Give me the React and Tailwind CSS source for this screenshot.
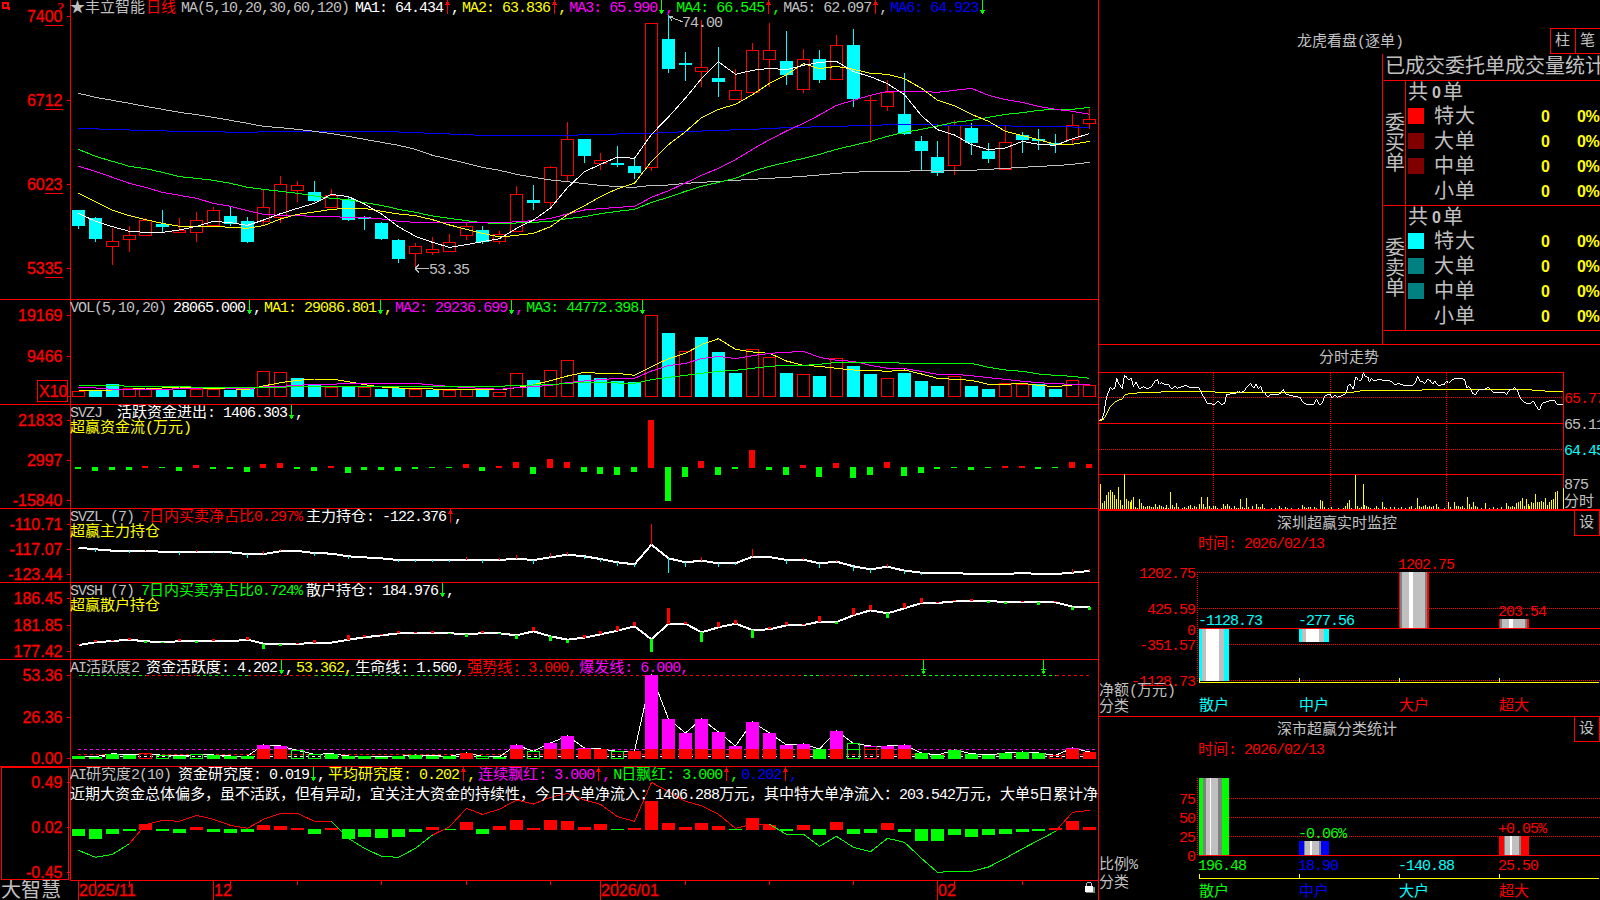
import React from "react";
import clsx from "clsx";

const RED = "#ff0000";
const CYAN = "#00ffff";
const GREEN = "#00ff00";
const YELLOW = "#ffff00";
const PINK = "#ff00ff";
const GREY = "#c0c0c0";
const DARK = "#808080";
const BLUE = "#0000ff";
const WHITE = "#ffffff";

const MONO = "'Liberation Mono', 'Noto Sans CJK SC', monospace";
const SANS = "'Liberation Sans', sans-serif";

// x position of the i-th trading day
const dayX = (i) => 78.5 + Math.round(i * 16.85);

// series are stored in thirds of a pixel below the given offset
const linePoints = (data, offset) => data.map(([i, v]) => `${dayX(i)},${offset + v / 3}`).join(" ");
const indexed = (values) => values.map((v, i) => [i, v]);

// [kind, body top, body bottom, high, low], kind c = falling, r = rising
const CANDLES = [
  ["c", 210, 226, 210, 228], ["c", 218, 239, 217, 241], ["r", 241, 246, 228, 264], ["r", 235, 239, 226, 251],
  ["r", 220, 235, 218, 235], ["c", 224, 227, 210, 231], ["r", 230, 232, 218, 232], ["r", 220, 232, 212, 241],
  ["r", 210, 225, 207, 225], ["c", 216, 224, 207, 225], ["c", 221, 242, 217, 242], ["r", 207, 221, 190, 225],
  ["r", 184, 217, 176, 222], ["r", 185, 190, 181, 201], ["c", 192, 201, 181, 201], ["r", 195, 207, 189, 207],
  ["c", 199, 220, 196, 220], ["c", 217, 219, 216, 229], ["c", 223, 239, 222, 239], ["c", 240, 259, 239, 262],
  ["r", 246, 253, 243, 268], ["r", 249, 252, 237, 254], ["r", 242, 251, 234, 251], ["r", 226, 235, 223, 239],
  ["c", 230, 242, 226, 243], ["r", 234, 241, 231, 243], ["r", 194, 231, 186, 231], ["c", 200, 203, 185, 209],
  ["r", 167, 202, 166, 208], ["r", 139, 175, 122, 181], ["c", 139, 156, 139, 162], ["r", 160, 163, 153, 169],
  ["c", 163, 165, 146, 166], ["c", 166, 173, 157, 178], ["r", 23, 167, 23, 170], ["c", 39, 69, 15, 72],
  ["c", 63, 65, 52, 80], ["r", 67, 71, 20, 86], ["c", 78, 82, 47, 96], ["r", 90, 99, 69, 99],
  ["r", 50, 92, 43, 92], ["r", 50, 59, 23, 86], ["c", 61, 75, 31, 84], ["r", 59, 89, 49, 92],
  ["c", 59, 80, 50, 82], ["r", 45, 79, 35, 79], ["c", 45, 99, 29, 106], ["r", 100, 100, 96, 142],
  ["r", 92, 106, 80, 110], ["c", 114, 134, 73, 134], ["c", 141, 151, 136, 170], ["c", 157, 173, 141, 175],
  ["r", 125, 165, 120, 174], ["c", 128, 143, 123, 154], ["c", 151, 159, 143, 162], ["r", 142, 169, 126, 169],
  ["c", 135, 140, 132, 152], ["c", 139, 141, 129, 149], ["c", 143, 145, 134, 152], ["r", 125, 139, 114, 144],
  ["r", 119, 123, 109, 128],
];

const MA5 = [640, 664, 680, 694, 697, 697, 690, 679, 664, 668, 676, 660, 641, 625, 610, 583, 590, 612, 642, 680, 709, 727, 742, 734, 725, 716, 685, 660, 624, 563, 515, 493, 471, 475, 403, 351, 294, 236, 185, 223, 211, 205, 209, 196, 187, 184, 215, 230, 251, 284, 347, 389, 405, 434, 449, 444, 424, 433, 436, 416, 401];
const MA10 = [580, 605, 631, 647, 659, 670, 679, 679, 679, 682, 685, 677, 657, 643, 636, 628, 625, 625, 634, 642, 647, 659, 675, 688, 700, 711, 706, 700, 680, 644, 617, 590, 566, 550, 484, 434, 395, 353, 328, 313, 284, 250, 224, 191, 206, 199, 208, 220, 223, 236, 265, 301, 317, 343, 364, 394, 407, 419, 433, 433, 424];
const MA20 = [499, 514, 532, 550, 562, 577, 586, 595, 610, 619, 632, 643, 646, 647, 649, 650, 652, 653, 657, 664, 667, 667, 667, 667, 668, 669, 665, 662, 655, 642, 630, 626, 622, 619, 592, 572, 549, 526, 505, 479, 448, 419, 393, 370, 345, 316, 301, 286, 274, 274, 274, 277, 271, 265, 286, 299, 307, 319, 328, 334, 343];
const MA30 = [448, 469, 484, 499, 506, 517, 530, 535, 541, 550, 562, 568, 574, 580, 588, 595, 599, 608, 616, 628, 637, 648, 655, 662, 668, 671, 669, 667, 664, 656, 650, 641, 634, 628, 607, 592, 574, 559, 547, 535, 514, 499, 487, 475, 463, 448, 436, 424, 409, 397, 388, 378, 367, 361, 352, 343, 338, 331, 328, 328, 322];
const MA60 = [280, 292, 301, 310, 319, 328, 337, 344, 352, 361, 370, 379, 383, 388, 394, 401, 409, 418, 427, 436, 448, 466, 478, 490, 502, 511, 523, 532, 540, 545, 551, 556, 560, 562, 556, 555, 550, 547, 544, 541, 538, 535, 532, 529, 525, 520, 517, 514, 514, 514, 511, 514, 511, 511, 508, 505, 502, 499, 497, 493, 487];
const MA120 = [[0, 385], [3, 390], [6, 394], [10, 397], [12, 394], [18, 394], [20, 398], [22, 402], [24, 406], [29, 406], [31, 403], [34, 400], [36, 395], [38, 391], [40, 388], [42, 383], [45, 379], [47, 376], [49, 373], [52, 376], [57, 379], [60, 382]];

const VOLUMES = "r303 c303 c282 r293 r296 c300 c300 r297 r297 c300 c296 r243 r246 c264 c285 r291 c291 r291 c297 c295 r298 c300 r300 r297 c297 r306 r250 c270 r240 r210 c255 c264 c273 c276 r76 c129 r184 c141 c186 c249 r178 r202 c249 r253 c258 r205 c228 c252 r265 c249 c273 c288 r259 c288 c297 r280 r281 c282 c297 r271 r286".split(" ");
const VOL_MA1 = [301, 301, 300, 298, 294, 294, 291, 294, 296, 296, 299, 288, 278, 271, 267, 267, 275, 284, 291, 294, 295, 297, 298, 298, 298, 300, 293, 284, 272, 258, 247, 250, 250, 256, 230, 206, 190, 164, 146, 178, 186, 190, 213, 226, 229, 235, 240, 241, 244, 240, 252, 265, 268, 271, 283, 283, 280, 286, 290, 285, 283];
const VOL_MA2 = [[0, 292], [1, 294], [2, 298], [5, 298], [8, 293], [10, 296], [11, 291], [12, 289], [13, 286], [14, 283], [15, 283], [16, 280], [20, 280], [21, 285], [22, 289], [23, 293], [24, 295], [25, 298], [26, 293], [27, 290], [28, 286], [29, 278], [30, 273], [31, 269], [32, 265], [33, 265], [34, 243], [35, 227], [36, 220], [37, 206], [38, 199], [39, 206], [40, 197], [41, 190], [42, 187], [43, 184], [44, 202], [45, 211], [46, 214], [47, 226], [48, 235], [49, 236], [50, 244], [51, 253], [52, 253], [53, 257], [54, 263], [55, 268], [56, 274], [57, 278], [58, 281], [59, 283], [60, 283]];
const VOL_MA3 = [[0, 286], [2, 286], [3, 289], [6, 289], [7, 292], [12, 292], [13, 289], [25, 289], [26, 286], [28, 284], [29, 280], [30, 277], [31, 278], [33, 280], [34, 269], [35, 262], [36, 256], [37, 250], [38, 244], [39, 241], [40, 235], [41, 229], [42, 226], [43, 226], [44, 223], [45, 217], [48, 217], [49, 220], [53, 220], [54, 232], [55, 240], [56, 244], [57, 252], [58, 256], [59, 259], [60, 265]];

const FLOW = [-2, -4, -3, -3, 2, -1, -4, 3, -2, -2, -5, 4, 5, -2, -4, 2, -6, -3, -3, -4, -2, -1, -1, 4, -4, 2, 6, -7, 9, 6, -5, -7, -8, -5, 48, -34, -10, 7, -8, -2, 18, -3, -8, 3, -10, 5, -11, -8, 6, -9, -6, -2, -1, -3, -1, 2, 2, -2, -1, 6, 4];

const MAIN_HOLD = [[0, 773], [1, 778], [2, 782], [3, 783], [4, 783], [5, 785], [6, 786], [8, 786], [9, 787], [10, 792], [11, 792], [12, 784], [13, 783], [14, 789], [15, 791], [16, 799], [17, 802], [18, 805], [19, 810], [25, 810], [26, 806], [27, 810], [28, 802], [29, 794], [30, 799], [31, 807], [32, 817], [33, 823], [34, 764], [35, 805], [36, 817], [37, 812], [38, 820], [39, 820], [40, 800], [41, 801], [42, 810], [43, 809], [44, 820], [45, 815], [46, 829], [47, 838], [48, 830], [49, 842], [50, 848], [52, 849], [53, 852], [55, 852], [56, 849], [57, 852], [58, 852], [59, 848], [60, 843]];
const MAIN_TICKS = [[1, 778, -7], [3, 783, -6], [4, 783, 4], [6, 786, -9], [7, 786, 6], [8, 786, -4], [9, 787, -5], [10, 792, -12], [11, 792, 8], [12, 784, 7], [14, 789, -8], [16, 799, -7], [19, 810, -6], [20, 810, -6], [21, 810, -5], [22, 810, -6], [23, 810, 8], [24, 810, -9], [25, 810, 5], [26, 806, 12], [27, 810, -12], [28, 802, 12], [29, 794, 8], [30, 799, -7], [31, 807, -10], [32, 817, -11], [33, 823, -8], [34, 764, 62], [35, 805, -44], [36, 817, -14], [37, 812, 11], [38, 820, -11], [39, 820, -6], [40, 800, 23], [42, 810, -12], [43, 809, 6], [44, 820, -14], [45, 815, 6], [46, 829, -14], [47, 838, -11], [48, 830, 8], [49, 842, -10], [50, 848, -7], [59, 848, 11], [60, 843, 6]];

const RETAIL_HOLD = [165, 157, 153, 149, 154, 156, 154, 154, 152, 154, 149, 161, 162, 162, 158, 158, 149, 142, 136, 130, 129, 128, 130, 132, 130, 130, 136, 124, 139, 149, 143, 133, 122, 109, 148, 101, 101, 127, 112, 101, 120, 118, 106, 105, 95, 96, 76, 61, 70, 55, 39, 39, 34, 33, 33, 36, 36, 36, 37, 50, 50];
const RETAIL_TICKS = [4, 6, 3, 5, -4, -4, 6, -4, 4, 0, 8, -16, -5, 3, 7, 0, 14, 6, 4, 6, 3, 4, -3, -8, 6, -3, -10, 13, -14, -10, 7, 10, 14, 13, -38, 46, 5, -28, 16, 11, -24, 7, 10, 3, 17, -5, 22, 16, -14, 16, 15, 3, 5, 6, -5, -5, 3, -8, 3, -10, -9];

// kind: g/r solid, G/R outlined, m = red with a pink part over the burst line
const ACTIVITY = "g498 g500 g491 g495 R490 G496 g498 G493 g495 g498 g498 m465 m468 G481 G493 g491 g498 g498 g500 g499 g495 g497 g499 r489 G499 G500 m465 G484 m459 m438 m474 r477 G484 r483 m255 m387 m429 m387 m426 m468 m396 m429 m465 m462 g477 m423 G460 R468 m468 m465 g489 g495 g480 g491 g495 g489 g486 g489 R496 m474 r486".split(" ");
const ACTIVITY_TOP = [[0, 4, GREEN], [4, 7, RED], [7, 10, GREEN], [10, 14, RED], [14, 22, GREEN], [22, 43, RED], [43, 44, GREEN], [44, 46, RED], [46, 47, GREEN], [47, 49, RED], [49, 58, GREEN], [58, 60, RED]];

const RESEARCH = [-21, -30, -15, -6, 18, -6, -12, 9, -9, -12, -9, 15, 12, 6, -15, 6, -30, -24, -27, -24, -9, 9, -3, 24, -15, 12, 30, 6, 30, 27, 9, 18, -3, 6, 87, 21, 9, 21, 12, -3, 36, 15, -6, 15, -18, 24, -15, -12, 21, -9, -36, -36, -18, -24, -18, -15, -9, -6, 6, 27, 9];
const RESEARCH_LINE = indexed([781, 802, 793, 761, 704, 691, 694, 676, 688, 706, 715, 688, 670, 670, 694, 694, 745, 775, 799, 802, 775, 735, 710, 655, 673, 658, 630, 642, 622, 610, 630, 643, 680, 694, 577, 605, 634, 647, 673, 715, 702, 703, 733, 733, 769, 739, 772, 785, 745, 757, 805, 847, 844, 844, 831, 805, 776, 751, 724, 667, 661]);
const RESEARCH_PARTS = [[0, 3, GREEN], [3, 15, RED], [15, 21, GREEN], [21, 41, RED], [41, 58, GREEN], [58, 60, RED]];

const PRICE = "28,257 36,252 42,235 46,205 50,185 56,170 61,157 68,163 74,160 80,130 86,145 97,162 103,121 110,126 116,135 124,130 130,155 138,140 148,162 160,155 172,162 184,155 196,138 202,133 208,148 214,142 222,148 236,148 244,162 256,152 262,160 274,155 288,152 300,157 328,159 334,175 342,187 352,205 360,205 372,210 384,198 394,209 404,205 410,178 420,177 438,175 446,167 452,174 462,168 472,155 482,146 492,160 498,148 504,160 512,155 520,172 526,175 532,186 544,177 560,180 572,175 580,163 588,178 604,182 630,187 638,202 650,208 672,207 680,193 690,211 698,202 704,182 720,178 726,189 736,181 742,187 758,181 768,175 774,153 780,148 790,163 797,126 806,136 814,136 820,112 826,125 834,127 838,142 844,131 854,138 870,132 882,137 900,137 914,149 926,146 942,151 966,153 976,145 983,124 990,138 998,140 1004,147 1012,133 1022,138 1028,148 1034,138 1044,151 1062,149 1070,138 1076,145 1084,136 1094,130 1114,130 1124,135 1130,158 1138,155 1148,176 1156,179 1166,165 1184,163 1194,157 1202,163 1212,174 1226,173 1242,172 1250,180 1258,165 1266,165 1274,157 1282,165 1290,187 1302,201 1312,206 1322,206 1330,197 1340,216 1348,226 1358,203 1376,199 1382,196 1394,198 1402,210 1420,209";
const PRICE_AVG = "28,257 40,254 48,240 60,215 76,200 96,192 106,178 140,174 215,171 230,169 372,169 378,172 790,172 796,170 818,167 996,166 1000,163 1322,163 1326,166 1362,167 1368,169 1420,169";
const TICK_VOL = "31:447,37:504,43:498,49:480,55:471,61:465,67:471,73:480,79:492,85:456,91:495,97:510,103:417,109:492,115:498,121:501,124:495,130:486,136:516,142:519,148:492,154:504,160:513,166:516,172:513,178:513,184:516,190:516,196:507,202:516,208:510,214:513,220:516,226:518,229:510,235:519,241:471,247:510,253:516,259:504,265:516,277:519,283:516,289:518,295:513,301:510,307:518,313:513,319:515,328:507,334:486,340:507,346:516,352:486,358:513,364:518,370:513,376:513,382:519,394:519,400:507,406:513,412:507,418:513,424:518,433:513,439:519,445:519,451:492,457:516,463:519,469:489,475:516,487:513,499:507,505:516,511:516,517:507,523:518,545:519,556:519,568:513,574:518,586:516,592:519,604:519,625:519,637:510,643:516,649:518,655:516,661:516,673:516,679:519,691:495,697:498,703:516,715:519,724:516,745:519,760:518,766:513,772:504,778:495,784:519,796:420,802:513,808:518,814:516,820:447,823:510,829:513,835:516,841:519,853:518,859:513,865:519,877:501,883:516,889:518,901:516,913:516,925:519,934:516,946:519,958:516,964:513,976:518,982:489,988:513,994:516,1000:513,1006:510,1012:516,1018:513,1024:516,1030:513,1039:507,1045:516,1063:519,1075:501,1081:516,1093:501,1099:513,1105:513,1111:516,1117:513,1123:518,1132:486,1138:507,1144:516,1150:501,1156:513,1162:516,1174:518,1186:504,1198:519,1210:516,1222:519,1234:516,1249:504,1255:513,1261:516,1267:513,1273:516,1279:504,1285:501,1291:498,1297:489,1303:513,1309:492,1315:507,1318:513,1324:501,1330:504,1336:477,1342:501,1348:501,1354:498,1360:501,1366:489,1372:510,1378:501,1384:495,1390:492,1396:471,1402:468,1420:459"
  .split(",")
  .map((p) => p.split(":").map(Number));

const splitRuns = (text) => text.match(/[\x20-\x7e]+|[^\x20-\x7e]+/g) || [];
const isLatin = (run) => /^[\x20-\x7e]/.test(run);

/**
 * Terminal text: half-width characters take 8px, full-width ones take 15px
 */
const Term = ({ children, className }) => (
  <span className={clsx("whitespace-pre", className)}>
    {splitRuns(children).map((run, i) => (
      <span key={i} className={isLatin(run) ? "tracking-[-1px]" : "tracking-normal"}>
        {run}
      </span>
    ))}
  </span>
);

// The same text inside a chart, cy is the vertical centre of the glyphs
const Label = ({ x, cy, fill, end, children }) => (
  <text
    x={end ? x + 1 : x}
    y={cy + 5}
    fill={fill}
    fontFamily={MONO}
    fontSize="15"
    textAnchor={end ? "end" : "start"}
    xmlSpace="preserve"
  >
    {splitRuns(children).map((run, i) => (
      <tspan key={i} letterSpacing={isLatin(run) ? "-1" : "0"}>
        {run}
      </tspan>
    ))}
  </text>
);

const AxisText = ({ x, y, end, children }) => (
  <text
    x={x}
    y={y}
    fill={RED}
    stroke={RED}
    strokeWidth="0.3"
    textAnchor={end ? "end" : "start"}
    fontFamily={SANS}
    fontSize="16"
  >
    {children}
  </text>
);

const Arrow = ({ up }) => (
  <svg className="w-2 h-[15px] shrink-0" viewBox="0 0 8 15" shapeRendering="crispEdges">
    {up ? (
      <path d="M4 0h1v14h-1zM3 2h3v2h-3zM2 4h5v1h-5z" fill={RED} />
    ) : (
      <path d="M4 0h1v14h-1zM3 11h3v2h-3zM2 10h5v1h-5z" fill={GREEN} />
    )}
  </svg>
);

const Reading = ({ text, dir, color }) => (
  <span className={clsx("flex mr-[3px]", color)}>
    <Term>{text}</Term>
    {dir && <Arrow up={dir === "up"} />}
    <Term>,</Term>
  </span>
);

const Header = ({ title, gap, children }) => (
  <div className="flex h-[15px] leading-[18px] pl-[70px]">
    <Term className={clsx("text-[#c0c0c0] leading-[17px]", gap)}>{title}</Term>
    {children}
  </div>
);

const Caption = ({ children }) => (
  <div className="h-[15px] pl-[70px] leading-[18px] text-[#ffff00]">
    <Term>{children}</Term>
  </div>
);

const Panel = ({ top, height, size, line = true, axis = [], chart, children }) => (
  <section className={clsx("relative shrink-0 overflow-hidden", size)}>
    <svg
      className="absolute inset-0 w-full h-full"
      viewBox={`0 ${top} 1098 ${height}`}
      shapeRendering="crispEdges"
      fill="none"
    >
      <rect x="70" y={top} width="1" height={height} fill={RED} />
      {line && <rect x="0" y={top + height - 1} width="1098" height="1" fill={RED} />}
      {axis.map(([label, y]) => (
        <g key={label}>
          <rect x="67" y={y} width="3" height="1" fill={RED} />
          <AxisText end x={62.5} y={y + 6}>{label}</AxisText>
        </g>
      ))}
      {chart}
    </svg>
    <div className="relative">{children}</div>
  </section>
);

const Line = ({ data, offset, color, width = 1 }) => (
  <polyline points={linePoints(data, offset)} stroke={color} strokeWidth={width} />
);

const KLineChart = () => (
  <>
    {[25, 109, 193, 277].map((y) => (
      <rect key={y} x="45" y={y} width="18" height="1" fill={RED} />
    ))}
    <path d="M3 3h5v5h-5z M7 8h2v2" stroke={RED} strokeWidth="2" />
    <text x="57" y="13" fill="#e00000" fontFamily="'Liberation Serif', serif" fontSize="15" fontWeight="bold">
      ?
    </text>
    {CANDLES.map(([kind, top, bottom, high, low], i) => {
      const x = dayX(i) - 0.5;
      const color = kind === "c" ? CYAN : RED;
      return (
        <g key={i}>
          <path d={`M${x + 0.5} ${high}V${top}M${x + 0.5} ${bottom}V${low + 1}`} stroke={color} />
          {kind === "c" && <rect x={x - 6} y={top} width="13" height={bottom - top} fill={CYAN} />}
          {kind === "r" && bottom > top && (
            <rect x={x - 5.5} y={top + 0.5} width="12" height={bottom - top} stroke={RED} />
          )}
          {kind === "r" && bottom === top && <rect x={x - 6} y={top} width="13" height="1" fill={RED} />}
        </g>
      );
    })}
    <Line data={MA120} offset={0} color={BLUE} />
    <Line data={indexed(MA60)} offset={0} color={GREY} />
    <Line data={indexed(MA30)} offset={0} color={GREEN} />
    <Line data={indexed(MA20)} offset={0} color={PINK} />
    <Line data={indexed(MA10)} offset={0} color={YELLOW} />
    <Line data={indexed(MA5)} offset={0} color={WHITE} />
    <path d="M669 16.5L683 22M669 16.5h4M669 16.5l3 4M415 268.5h14M415 268.5l4 -4M415 268.5l4 4" stroke={GREY} />
    <Label x={682} cy={22} fill={GREY}>74.00</Label>
    <Label x={429} cy={269} fill={GREY}>53.35</Label>
  </>
);

const VolumeChart = () => (
  <>
    <rect x="37.5" y="380.5" width="30" height="21" stroke={RED} />
    <rect x="67" y="396" width="3" height="1" fill={RED} />
    <AxisText x={39} y={397}>X10</AxisText>
    {VOLUMES.map((item, i) => {
      const y = 290 + Math.round(item.slice(1) / 3);
      const x = dayX(i) - 0.5;
      return item[0] === "c" ? (
        <rect key={i} x={x - 6} y={y} width="13" height={397 - y} fill={CYAN} />
      ) : (
        <rect key={i} x={x - 5.5} y={y + 0.5} width="12" height={396 - y} stroke={RED} />
      );
    })}
    <Line data={indexed(VOL_MA1)} offset={290} color={YELLOW} />
    <Line data={VOL_MA2} offset={290} color={PINK} />
    <Line data={VOL_MA3} offset={290} color={GREEN} />
  </>
);

const FlowChart = () =>
  FLOW.map((v, i) => (
    <rect
      key={i}
      x={dayX(i) - 3.5}
      y={v > 0 ? 468 - v : 467}
      width="6"
      height={Math.abs(v)}
      fill={v > 0 ? RED : GREEN}
    />
  ));

const MainHoldChart = () => (
  <>
    <Line data={MAIN_HOLD} offset={290} color={WHITE} width={2} />
    {MAIN_TICKS.map(([i, y, v]) => (
      <rect
        key={i}
        x={dayX(i) - 0.5}
        y={290 + (v > 0 ? y - v : y) / 3}
        width="1"
        height={Math.abs(v) / 3}
        fill={v > 0 ? RED : CYAN}
      />
    ))}
  </>
);

const RetailHoldChart = () => (
  <>
    <Line data={indexed(RETAIL_HOLD)} offset={590} color={WHITE} width={2} />
    {RETAIL_TICKS.map((v, i) => (
      <rect
        key={i}
        x={dayX(i) - 1.5}
        y={590 + (v > 0 ? RETAIL_HOLD[i] - v : RETAIL_HOLD[i]) / 3}
        width="3"
        height={Math.abs(v) / 3}
        fill={v > 0 ? RED : GREEN}
      />
    ))}
  </>
);

const ActivityChart = () => (
  <>
    {ACTIVITY_TOP.map(([from, to, color]) => (
      <line key={from} x1={dayX(from)} x2={dayX(to)} y1="675.5" y2="675.5" stroke={color} strokeDasharray="3 3" />
    ))}
    <path d="M78 749.5H1095" stroke={PINK} strokeDasharray="3 3" />
    <path d="M78 754.5H1095" stroke={RED} strokeDasharray="3 3" />
    <path d="M78 756.5H1095" stroke={WHITE} strokeDasharray="3 3" />
    <Line data={ACTIVITY.map((item, i) => [i, Number(item.slice(1))])} offset={590} color={WHITE} />
    {ACTIVITY.map((item, i) => {
      const kind = item[0];
      const y = 590 + Math.round(item.slice(1) / 3);
      const x = dayX(i) - 0.5;
      if (kind === "G" || kind === "R") {
        return (
          <g key={i}>
            <rect x={x - 5.5} y={y + 0.5} width="12" height={758 - y} stroke={kind === "G" ? GREEN : RED} />
            {y < 748 && <rect x={x - 6} y="749" width="13" height="1" fill={kind === "G" ? GREEN : RED} />}
            {y < 748 && kind === "R" && <rect x={x - 6} y={y} width="13" height="1" fill={PINK} />}
          </g>
        );
      }
      return (
        <g key={i}>
          <rect x={x - 6} y={y} width="13" height={759 - y} fill={kind === "g" ? GREEN : RED} />
          {kind === "m" && <rect x={x - 6} y={y} width="13" height={749 - y} fill={PINK} />}
        </g>
      );
    })}
    {[923, 1043].map((x) => (
      <path key={x} d={`M${x} 660h1v14h-1zM${x - 1} 671h3v2h-3zM${x - 2} 669h5v1h-5z`} fill={GREEN} />
    ))}
  </>
);

const ResearchChart = () => (
  <>
    <rect x="1.5" y="767.5" width="67" height="112" stroke={RED} />
    {RESEARCH.map((v, i) => (
      <rect
        key={i}
        x={dayX(i) - 6.5}
        y={v > 0 ? 830 - v / 3 : 829}
        width="13"
        height={Math.abs(v) / 3}
        fill={v > 0 ? RED : GREEN}
      />
    ))}
    {RESEARCH_PARTS.map(([from, to, color]) => (
      <Line key={from} data={RESEARCH_LINE.slice(from, to + 1)} offset={590} color={color} />
    ))}
  </>
);

const MONTHS = [[0, "2025/11"], [8, "12"], [31, "2026/01"], [51, "02"]];
const WEEKS = [1, 3, 9, 13, 18, 23, 28, 32, 36, 41, 46, 52, 56];

const TimeAxis = () => (
  <footer className="flex h-5 shrink-0">
    <div className="w-[70px] h-5 pl-px text-[20px] leading-6 text-[#c0c0c0] whitespace-nowrap">大智慧</div>
    <svg className="w-[1028px] h-5" viewBox="70 880 1028 20" shapeRendering="crispEdges">
      <rect x="70" y="880" width="1028" height="1" fill={RED} />
      {MONTHS.map(([i, label]) => (
        <g key={i}>
          <rect x={dayX(i) - 0.5} y="880" width="1" height="20" fill={RED} />
          <AxisText x={dayX(i) + 0.5} y={896}>{label}</AxisText>
        </g>
      ))}
      {WEEKS.map((i) => (
        <rect key={i} x={dayX(i) - 0.5} y="880" width="1" height="5" fill={RED} />
      ))}
      <path d="M1087 882h4v1h-4zM1086 883h1v3h-1zM1091 883h1v3h-1z" fill={GREY} />
      <rect x="1086" y="887" width="9" height="6" fill={DARK} />
      <rect x="1085" y="886" width="8" height="6" fill={WHITE} />
    </svg>
  </footer>
);

const LeftCharts = () => (
  <main className="flex flex-col w-[1099px] h-[900px] shrink-0 border-r border-[#ff0000] overflow-hidden">
    <Panel
      top={0}
      height={300}
      size="h-[300px]"
      axis={[["7400", 16], ["6712", 100], ["6023", 184], ["5335", 268]]}
      chart={<KLineChart />}
    >
      <Header title="★丰立智能" gap="mr-px">
        <Term className="text-[#ff0000] mr-[5px]">日线</Term>
        <Term className="text-[#c0c0c0] mr-1.5">MA(5,10,20,30,60,120)</Term>
        <Reading text="MA1: 64.434" dir="up" color="text-white" />
        <Reading text="MA2: 63.836" dir="up" color="text-[#ffff00]" />
        <Reading text="MA3: 65.990" dir="down" color="text-[#ff00ff]" />
        <Reading text="MA4: 66.545" dir="up" color="text-[#00ff00]" />
        <Reading text="MA5: 62.097" dir="up" color="text-[#c0c0c0]" />
        <span className="flex text-[#0000ff]">
          <Term>MA6: 64.923</Term>
          <Arrow />
        </span>
      </Header>
    </Panel>

    <Panel top={300} height={105} size="h-[105px]" axis={[["19169", 315], ["9466", 356]]} chart={<VolumeChart />}>
      <Header title="VOL(5,10,20)" gap="mr-[7px]">
        <Reading text="28065.000" dir="down" color="text-white" />
        <Reading text="MA1: 29086.801" dir="down" color="text-[#ffff00]" />
        <Reading text="MA2: 29236.699" dir="down" color="text-[#ff00ff]" />
        <span className="flex text-[#00ff00]">
          <Term>MA3: 44772.398</Term>
          <Arrow />
        </span>
      </Header>
    </Panel>

    <Panel
      top={405}
      height={104}
      size="h-[104px]"
      axis={[["21833", 420], ["2997", 460], ["-15840", 500]]}
      chart={<FlowChart />}
    >
      <Header title="SVZJ" gap="mr-[15px]">
        <Reading text="活跃资金进出: 1406.303" dir="down" color="text-white" />
      </Header>
      <Caption>超赢资金流(万元)</Caption>
    </Panel>

    <Panel
      top={509}
      height={74}
      size="h-[74px]"
      axis={[["-110.71", 524], ["-117.07", 549], ["-123.44", 574]]}
      chart={<MainHoldChart />}
    >
      <Header title="SVZL (7)" gap="mr-[7px]">
        <Term className="text-[#ff0000] mr-1">7日内买卖净占比0.297%</Term>
        <Reading text="主力持仓: -122.376" dir="up" color="text-white" />
      </Header>
      <Caption>超赢主力持仓</Caption>
    </Panel>

    <Panel
      top={583}
      height={77}
      size="h-[77px]"
      axis={[["186.45", 598], ["181.85", 625], ["177.42", 651]]}
      chart={<RetailHoldChart />}
    >
      <Header title="SVSH (7)" gap="mr-[7px]">
        <Term className="text-[#00ff00] mr-1">7日内买卖净占比0.724%</Term>
        <Reading text="散户持仓: 184.976" dir="down" color="text-white" />
      </Header>
      <Caption>超赢散户持仓</Caption>
    </Panel>

    <Panel
      top={660}
      height={107}
      size="h-[107px]"
      axis={[["53.36", 675], ["26.36", 717], ["0.00", 758]]}
      chart={<ActivityChart />}
    >
      <Header title="AI活跃度2" gap="mr-[7px]">
        <Reading text="资金活跃度: 4.202" dir="down" color="text-white" />
        <Reading text="53.362" color="text-[#ffff00]" />
        <Reading text="生命线: 1.560" color="text-white" />
        <Reading text="强势线: 3.000" color="text-[#ff0000]" />
        <Reading text="爆发线: 6.000" color="text-[#ff00ff]" />
      </Header>
    </Panel>

    <Panel
      top={767}
      height={113}
      size="h-[113px]"
      line={false}
      axis={[["0.49", 782], ["0.02", 827], ["-0.45", 872]]}
      chart={<ResearchChart />}
    >
      <Header title="AI研究度2(10)" gap="mr-[7px]">
        <Reading text="资金研究度: 0.019" dir="down" color="text-white" />
        <Reading text="平均研究度: 0.202" dir="up" color="text-[#ffff00]" />
        <Reading text="连续飘红: 3.000" dir="up" color="text-[#ff00ff]" />
        <Reading text="N日飘红: 3.000" dir="up" color="text-[#00ff00]" />
        <Reading text="0.202" dir="up" color="text-[#0000ff]" />
      </Header>
      <div className="pl-[70px] mt-[5px] leading-[18px] text-white whitespace-nowrap">
        <Term>
          近期大资金总体偏多，虽不活跃，但有异动，宜关注大资金的持续性，今日大单净流入：1406.288万元，其中特大单净流入：203.542万元，大单5日累计净
        </Term>
      </div>
    </Panel>

    <TimeAxis />
  </main>
);

const ORDER_ROWS = ["特大", "大单", "中单", "小单"];

const OrderBlock = ({ side, swatches }) => (
  <div className="flex h-[125px] border-b border-[#ff0000]">
    <div className="w-[22px] shrink-0 pl-px pt-[34px] border-r border-[#ff0000] flex flex-col">
      {side.split("").map((ch) => (
        <span key={ch} className="h-5 leading-5">{ch}</span>
      ))}
    </div>
    <div className="flex-1">
      <div className="flex h-[23px] leading-[25px] pl-0.5">
        共<b className="w-[11px] ml-1 text-base leading-[23px] font-['Liberation_Sans',sans-serif]">0</b>单
      </div>
      {ORDER_ROWS.map((name, i) => (
        <div key={name} className="flex h-[25px] pl-[2px] leading-[27px]">
          <i className={clsx("size-4 mt-1 shrink-0", swatches[i])} />
          <span className="w-[117px] pl-2.5 tracking-[1px] whitespace-nowrap">{name}</span>
          <b className="w-9 shrink-0 text-[#ffff00] text-base leading-[25px] font-['Liberation_Sans',sans-serif]">0</b>
          <b className="shrink-0 text-[#ffff00] text-base leading-[25px] tracking-[-0.5px] font-['Liberation_Sans',sans-serif]">
            0%
          </b>
        </div>
      ))}
    </div>
  </div>
);

const OrderPanel = () => (
  <section className="flex flex-col h-[345px] border-b border-[#ff0000] text-[#c0c0c0]">
    <div className="flex h-[54px] pt-7 pl-[198px]">
      <Term className="leading-[29px]">龙虎看盘(逐单)</Term>
      <div className="flex ml-auto h-[26px] leading-[26px] border border-r-0 border-[#ff0000]">
        <span className="w-[25px] pl-1 border-r border-[#ff0000]">柱</span>
        <span className="w-[24px] pl-1">笔</span>
      </div>
    </div>
    <div className="flex-1 ml-[283px] pl-px border-l border-[#ff0000] text-[20px] overflow-hidden">
      <h2 className="h-[27px] pl-px leading-7 border-b border-[#ff0000] whitespace-nowrap">
        已成交委托单成交量统计
      </h2>
      <OrderBlock side="委买单" swatches={["bg-[#ff0000]", "bg-[#800000]", "bg-[#800000]", "bg-black"]} />
      <OrderBlock side="委卖单" swatches={["bg-[#00ffff]", "bg-[#008080]", "bg-[#008080]", "bg-black"]} />
    </div>
  </section>
);

const IntradayPanel = () => (
  <section className="h-[164px]">
    <h2 className="h-[27px] pl-[220px] leading-[28px] text-[#c0c0c0]">分时走势</h2>
    <svg className="w-[501px] h-[137px]" viewBox="1099 372 501 137" shapeRendering="crispEdges" fill="none">
      <path d="M1099 372.5h464.5V509M1099 423.5h464M1099 474.5h464" stroke={RED} />
      <path
        d="M1099 397.5h464M1099 449.5h464M1213.5 373v136M1330.5 373v136M1446.5 373v136"
        stroke={RED}
        strokeDasharray="1 1"
      />
      <g transform="translate(1090 335) scale(0.33333)">
        {TICK_VOL.map(([x, top]) => (
          <rect key={x} x={x - 1} y={top} width="3" height={522 - top} fill={YELLOW} />
        ))}
        <polyline points={PRICE_AVG} stroke={YELLOW} strokeWidth="3" />
        <polyline points={PRICE} stroke={WHITE} strokeWidth="3" />
      </g>
      <Label x={1564} cy={398} fill={RED}>65.77</Label>
      <Label x={1564} cy={424} fill={GREY}>65.11</Label>
      <Label x={1564} cy={450} fill={CYAN}>64.45</Label>
      <Label x={1564} cy={484} fill={GREY}>875</Label>
      <Label x={1564} cy={501} fill={GREY}>分时</Label>
    </svg>
  </section>
);

// stripes: [x, width, color] inside a 30px wide cylinder
const Cylinder = ({ x, y, height, stripes }) =>
  stripes.map(([dx, w, color]) => <rect key={dx} x={x + dx} y={y} width={w} height={height} fill={color} />);

const LOSS = [[0, 3, CYAN], [3, 4, GREY], [7, 13, WHITE], [20, 5, GREY], [25, 5, CYAN]];
const GAIN = [[0, 1, RED], [1, 2, DARK], [3, 7, GREY], [10, 4, WHITE], [14, 12, GREY], [26, 2, DARK], [28, 2, RED]];
const GREEN_TUBE = [[0, 4, GREEN], [4, 3, DARK], [7, 4, GREY], [11, 1, WHITE], [12, 7, GREY], [19, 4, DARK], [23, 7, GREEN]];
const tube = (color) => [[0, 5, color], [5, 1, DARK], [6, 5, GREY], [11, 2, WHITE], [13, 7, GREY], [20, 2, DARK], [22, 8, color]];

const StatHeader = ({ title }) => (
  <>
    <div className="flex justify-between h-[25px] text-[#c0c0c0]">
      <h2 className="pl-[178px] leading-7">{title}</h2>
      <span className="w-[26px] h-[25px] pl-1 leading-[26px] border border-t-0 border-[#ff0000]">设</span>
    </div>
    <div className="pl-[99px] leading-[17px] text-[#ff0000]">
      <Term>时间: 2026/02/13</Term>
    </div>
  </>
);

const CategoryAxis = ({ y }) => (
  <path d={`M1199 ${y + 0.5}h400M1199.5 ${y - 4}v4M1299.5 ${y - 4}v4M1399.5 ${y - 4}v4M1499.5 ${y - 4}v4`} stroke={YELLOW} />
);

const MonitorPanel = () => (
  <section className="h-[208px] border-t-2 border-b border-[#ff0000]">
    <StatHeader title="深圳超赢实时监控" />
    <svg className="w-[501px] h-[163px]" viewBox="1099 553 501 163" shapeRendering="crispEdges" fill="none">
      <path
        d="M1197.5 572v109M1199 572.5h401M1199 608.5h401M1199 644.5h401M1199 680.5h401"
        stroke={RED}
        strokeDasharray="1 1"
      />
      <path d="M1199 628.5h401" stroke={RED} />
      <Cylinder x={1199} y={629} height={52} stripes={LOSS} />
      <Cylinder x={1299} y={629} height={13} stripes={LOSS} />
      <Cylinder x={1399} y={572} height={56} stripes={GAIN} />
      <Cylinder x={1499} y={619} height={9} stripes={GAIN} />
      <CategoryAxis y={682} />
      <Label end x={1194} cy={573} fill={RED}>1202.75</Label>
      <Label end x={1194} cy={609} fill={RED}>425.59</Label>
      <Label end x={1194} cy={630} fill={RED}>0</Label>
      <Label end x={1194} cy={645} fill={RED}>-351.57</Label>
      <Label end x={1194} cy={681} fill={RED}>-1128.73</Label>
      <Label x={1198} cy={620} fill={CYAN}>-1128.73</Label>
      <Label x={1298} cy={620} fill={CYAN}>-277.56</Label>
      <Label x={1398} cy={564} fill={RED}>1202.75</Label>
      <Label x={1498} cy={611} fill={RED}>203.54</Label>
      <Label x={1099} cy={690} fill={GREY}>净额(万元)</Label>
      <Label x={1099} cy={706} fill={GREY}>分类</Label>
      <Label x={1199} cy={705} fill={CYAN}>散户</Label>
      <Label x={1299} cy={705} fill={CYAN}>中户</Label>
      <Label x={1399} cy={705} fill={RED}>大户</Label>
      <Label x={1499} cy={705} fill={RED}>超大</Label>
    </svg>
  </section>
);

const CategoryPanel = () => (
  <section className="h-[183px]">
    <StatHeader title="深市超赢分类统计" />
    <svg className="w-[501px] h-[141px]" viewBox="1099 759 501 141" shapeRendering="crispEdges" fill="none">
      <path
        d="M1197.5 778v77M1199 798.5h401M1199 817.5h401M1199 836.5h401"
        stroke={RED}
        strokeDasharray="1 1"
      />
      <path d="M1199 855.5h401" stroke={RED} />
      <Cylinder x={1199} y={778} height={77} stripes={GREEN_TUBE} />
      <Cylinder x={1299} y={841} height={14} stripes={tube(BLUE)} />
      <Cylinder x={1499} y={836} height={19} stripes={tube(RED)} />
      <CategoryAxis y={878} />
      <Label end x={1194} cy={799} fill={RED}>75</Label>
      <Label end x={1194} cy={818} fill={RED}>50</Label>
      <Label end x={1194} cy={837} fill={RED}>25</Label>
      <Label end x={1194} cy={856} fill={RED}>0</Label>
      <Label x={1298} cy={833} fill={GREEN}>-0.06%</Label>
      <Label x={1498} cy={828} fill={RED}>+0.05%</Label>
      <Label x={1198} cy={865} fill={GREEN}>196.48</Label>
      <Label x={1298} cy={865} fill={BLUE}>18.90</Label>
      <Label x={1398} cy={865} fill={CYAN}>-140.88</Label>
      <Label x={1498} cy={865} fill={RED}>25.50</Label>
      <Label x={1099} cy={864} fill={GREY}>比例%</Label>
      <Label x={1099} cy={882} fill={GREY}>分类</Label>
      <Label x={1199} cy={891} fill={GREEN}>散户</Label>
      <Label x={1299} cy={891} fill={BLUE}>中户</Label>
      <Label x={1399} cy={891} fill={CYAN}>大户</Label>
      <Label x={1499} cy={891} fill={RED}>超大</Label>
    </svg>
  </section>
);

const App = () => (
  <div className="flex w-[1600px] h-[900px] overflow-hidden bg-black text-[15px] font-['Liberation_Mono','Noto_Sans_CJK_SC',monospace]">
    <LeftCharts />
    <aside className="w-[501px] h-[900px] overflow-hidden">
      <OrderPanel />
      <IntradayPanel />
      <MonitorPanel />
      <CategoryPanel />
    </aside>
  </div>
);

export default App;
